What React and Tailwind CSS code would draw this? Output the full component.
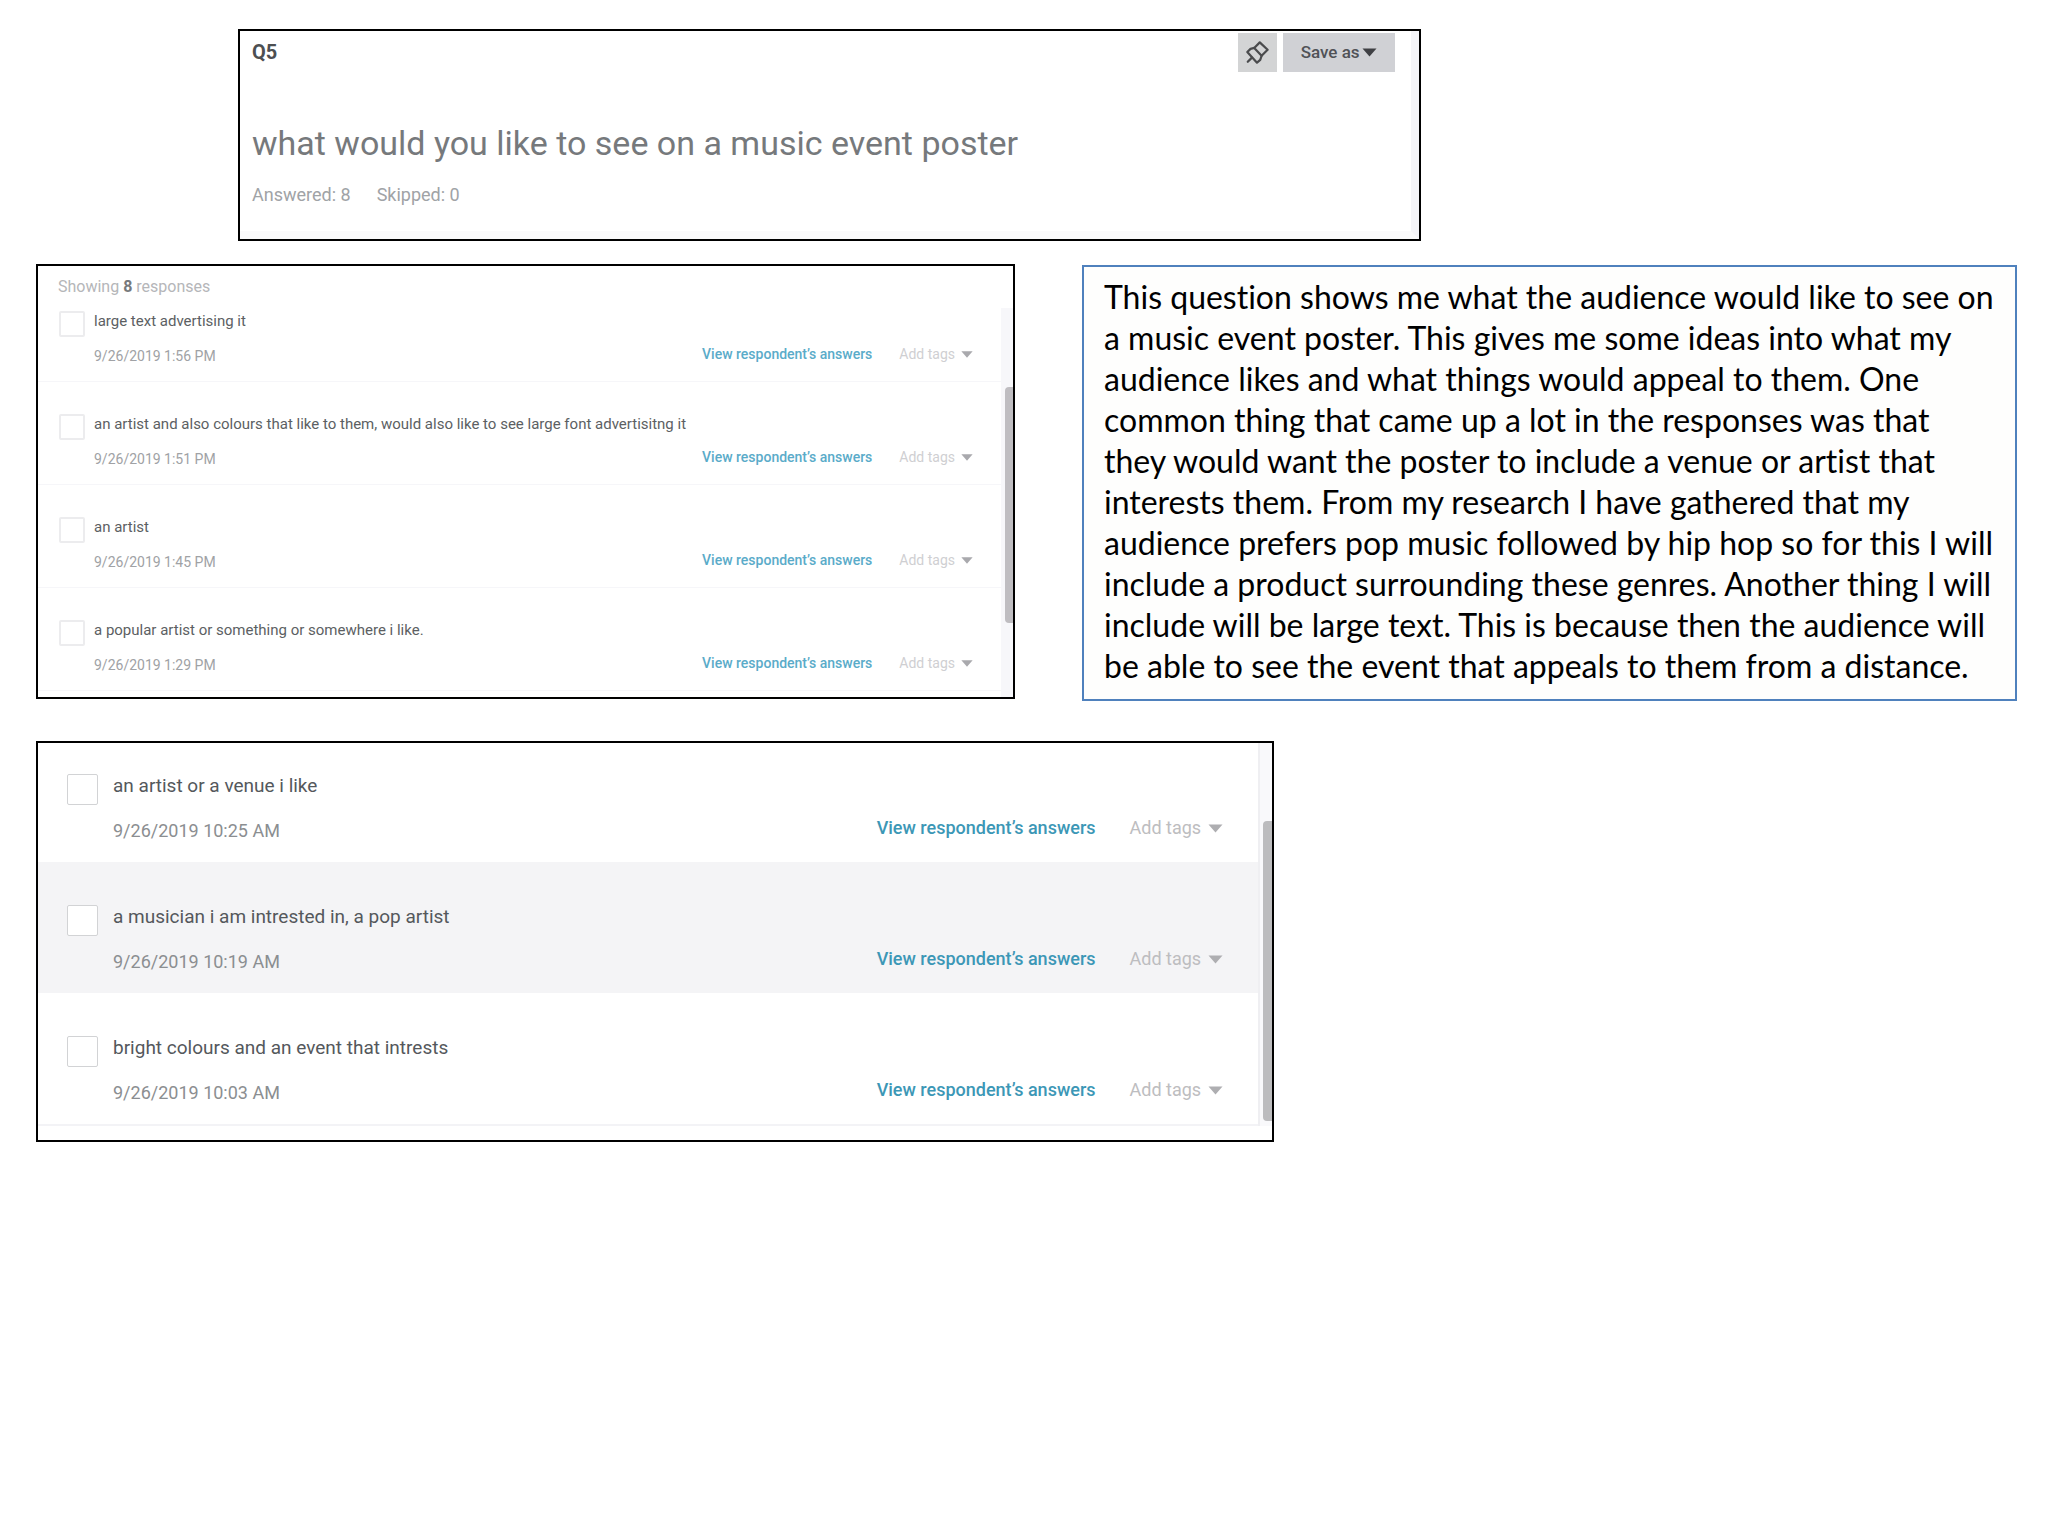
const small = {
  row: "h-[103px] pt-8 pl-[21px] pr-7 border-b border-[#f6f6f9]",
  box: "size-[26px] border-2 border-[#ececee]",
  text: "ml-[9px]",
  title: "text-[15px] leading-5 text-[#5c5f63]",
  date: "mt-[15px] text-[14px] leading-5 text-[#a0a2a5]",
  actions: "mt-[33px] gap-[27px]",
  link: "font-medium text-[14px] leading-5 text-[#5aabc9]",
  tags: "text-[14px] leading-5 text-[#cfcfd2] gap-1.5",
  caret: "w-[12px] h-[7px] text-[#a9a9ad]",
};

const large = {
  row: "h-[131px] pt-[43px] first:h-[119px] first:pt-[31px] pl-[29px] pr-9",
  box: "size-[31px] border border-[#d2d3d5]",
  text: "ml-[15px]",
  title: "text-[19px] leading-6 text-[#54585c]",
  date: "mt-[21px] text-[18px] leading-6 text-[#8b8e91]",
  actions: "mt-[42px] gap-[34px]",
  link: "font-medium text-[18px] leading-6 text-[#3c97b6]",
  tags: "text-[18px] leading-6 text-[#bdbdc0] gap-[7px]",
  caret: "w-[15px] h-[9px] text-[#aeaeb1]",
};

function Caret({ className }) {
  return (
    <svg viewBox="0 0 16 10" preserveAspectRatio="none" className={className} fill="currentColor" aria-hidden="true">
      <path d="M0.5 0.5h15L8 9.5z" />
    </svg>
  );
}

function PinIcon() {
  return (
    <svg viewBox="0 0 26 26" className="size-[24px]" fill="none" stroke="#4a4b4d" strokeWidth="2.4" strokeLinejoin="round" strokeLinecap="round" aria-hidden="true">
      <path d="M16 1.5 24.5 9.5 18 16 10 7.500z" />
      <path d="M10 7.500 6 8.500 2.500 12 13 23.500 16.500 20.500 18 16" />
      <path d="M7.500 18 3 22.500" />
    </svg>
  );
}

function Row({ id, title, date, s, highlight }) {
  return (
    <li className={`flex items-start ${s.row} ${highlight ? "bg-[#f4f4f6]" : ""}`}>
      <input
        id={id}
        type="checkbox"
        className={`shrink-0 appearance-none rounded-[2px] bg-white ${s.box}`}
      />
      <div className={`min-w-0 ${s.text}`}>
        <label htmlFor={id} className={`block whitespace-nowrap ${s.title}`}>{title}</label>
        <p className={s.date}>{date}</p>
      </div>
      <div className={`ml-auto flex shrink-0 items-center ${s.actions}`}>
        <a href="#answers" className={s.link}>View respondent’s answers</a>
        <button type="button" className={`flex items-center ${s.tags}`}>
          Add tags
          <Caret className={s.caret} />
        </button>
      </div>
    </li>
  );
}

const afternoon = [
  ["large text advertising it", "9/26/2019 1:56 PM"],
  ["an artist and also colours that like to them, would also like to see large font advertisitng it", "9/26/2019 1:51 PM"],
  ["an artist", "9/26/2019 1:45 PM"],
  ["a popular artist or something or somewhere i like.", "9/26/2019 1:29 PM"],
];

const morning = [
  ["an artist or a venue i like", "9/26/2019 10:25 AM"],
  ["a musician i am intrested in, a pop artist", "9/26/2019 10:19 AM"],
  ["bright colours and an event that intrests", "9/26/2019 10:03 AM"],
];

const notes = [
  "This question shows me what the audience would like to see on",
  "a music event poster. This gives me some ideas into what my",
  "audience likes and what things would appeal to them. One",
  "common thing that came up a lot in the responses was that",
  "they would want the poster to include a venue or artist that",
  "interests them. From my research I have gathered that my",
  "audience prefers pop music followed by hip hop so for this I will",
  "include a product surrounding these genres. Another thing I will",
  "include will be large text. This is because then the audience will",
  "be able to see the event that appeals to them from a distance.",
];

export default function App() {
  return (
    <main className="min-h-screen bg-white pt-[29px] pr-[31px] pb-9 pl-9 font-['Roboto',sans-serif]">
      <section className="ml-[202px] w-[59.7%] border-2 border-black">
        <div className="border-r-8 border-b-8 border-r-[#f4f4f8] border-b-[#fafafb] pl-3">
          <div className="flex items-start justify-between pr-4">
            <h2 className="mt-[9px] text-[20px] leading-6 font-bold text-[#4d4f52]">Q5</h2>
            <div className="mt-0.5 flex gap-1.5">
              <button type="button" aria-label="Pin" className="flex h-[39px] w-[39px] items-center justify-center bg-[#d3d4d5]">
                <PinIcon />
              </button>
              <button type="button" className="flex h-[39px] w-[112px] items-center justify-center gap-0.5 bg-[#d0d1d5] text-[17px] font-medium text-[#505257]">
                Save as
                <Caret className="h-[9px] w-[15px] text-[#3f4044]" />
              </button>
            </div>
          </div>
          <h1 className="mt-[47px] text-[34px] leading-[48px] text-[#76797c]">what would you like to see on a music event poster</h1>
          <p className="mt-4 flex gap-[26px] pb-6 text-[18px] leading-6 text-[#a0a3a6]">
            <span>Answered: 8</span>
            <span>Skipped: 0</span>
          </p>
        </div>
      </section>

      <div className="mt-[23px] grid grid-cols-[979fr_935fr] items-start gap-x-[67px]">
        <section className="relative h-[435px] overflow-hidden border-2 border-black">
          <p className="mt-[9px] h-1 pl-5 text-[16px] leading-6 text-[#b5b6b9]">
            Showing <b className="text-[#77797c]">8</b> responses
          </p>
          <ul className="pr-3">
            {afternoon.map(([title, date], i) => (
              <Row key={title} id={`pm-${i}`} title={title} date={date} s={small} />
            ))}
          </ul>
          <div className="absolute top-[42px] right-0 bottom-0 w-3 bg-[#f7f7fa] pt-[79px] pl-1">
            <div className="h-[236px] rounded-l bg-[#bfbdc1]" />
          </div>
        </section>

        <section className="mt-px border-2 border-[#4f81bd] bg-[#fefefd] px-5 pt-[9px] pb-[13px] font-['Lato',sans-serif] text-[32px] leading-[41px] text-black [font-variant-ligatures:none]">
          <p>
            {notes.map((line) => (
              <span key={line} className="block whitespace-nowrap">{line} </span>
            ))}
          </p>
        </section>
      </div>

      <section className="relative mt-10 w-[62.5%] border-2 border-black pb-3.5">
        <ul className="border-b-2 border-[#f3f3f6] pr-[13px]">
          {morning.map(([title, date], i) => (
            <Row key={title} id={`am-${i}`} title={title} date={date} s={large} highlight={i === 1} />
          ))}
        </ul>
        <div className="absolute top-0 right-0 bottom-3.5 w-[14px] border-l-2 border-[#efeff2] bg-[#f9f9fb] pt-[78px] pl-[3px]">
          <div className="h-[300px] rounded-l bg-[#bcbcbe]" />
        </div>
      </section>
    </main>
  );
}
